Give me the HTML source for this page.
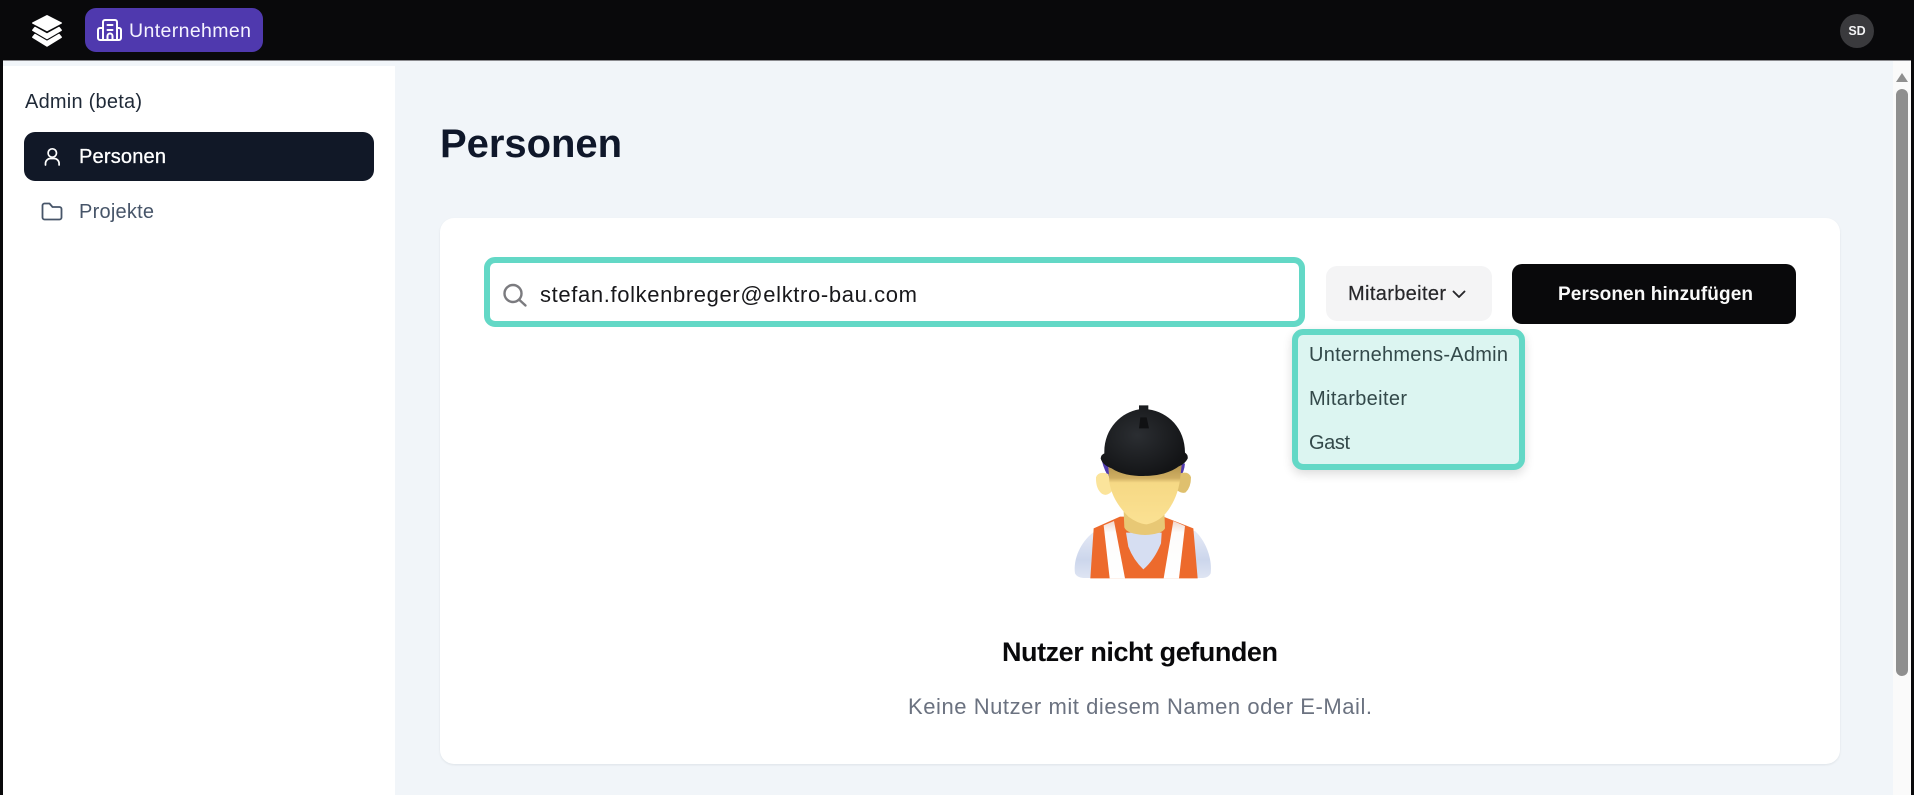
<!DOCTYPE html>
<html lang="de">
<head>
<meta charset="utf-8">
<title>Personen</title>
<style>
html,body{margin:0;padding:0;width:1914px;height:795px;overflow:hidden;background:#f1f5f9;font-family:"Liberation Sans",sans-serif}
.b{position:absolute;box-sizing:border-box}
svg{position:absolute;left:0;top:0;filter:blur(.3px)}
text{font-family:"Liberation Sans",sans-serif}
</style>
</head>
<body>
<div class="b" style="left:0;top:0;width:1914px;height:60px;background:#09090b"></div>
<div class="b" style="left:0;top:60px;width:1914px;height:1px;background:#8a8a8e"></div>
<div class="b" style="left:0;top:0;width:3px;height:795px;background:#09090b"></div>
<div class="b" style="left:1911px;top:0;width:3px;height:795px;background:#09090b"></div>
<div class="b" style="left:85px;top:8px;width:178px;height:44px;background:#4f39ae;border-radius:11px"></div>
<div class="b" style="left:1840px;top:14px;width:34px;height:34px;background:#3a3a3d;border-radius:50%"></div>
<div class="b" style="left:3px;top:66px;width:392px;height:729px;background:#fff"></div>
<div class="b" style="left:24px;top:132px;width:350px;height:49px;background:#111827;border-radius:11px"></div>
<div class="b" style="left:1893px;top:61px;width:18px;height:734px;background:#fafafa"></div>
<div class="b" style="left:1896px;top:89px;width:12px;height:587px;background:#8f8f8f;border-radius:6px"></div>
<div class="b" style="left:440px;top:218px;width:1400px;height:546px;background:#fff;border-radius:14px;box-shadow:0 1px 2px rgba(15,23,42,.08)"></div>
<div class="b" style="left:484px;top:257px;width:821px;height:70px;background:#fff;border:6px solid #63d8c6;border-radius:11px"></div>
<div class="b" style="left:1326px;top:266px;width:166px;height:55px;background:#f4f4f5;border-radius:11px"></div>
<div class="b" style="left:1512px;top:264px;width:284px;height:60px;background:#09090b;border-radius:10px"></div>
<div class="b" style="left:1292px;top:329px;width:233px;height:141px;background:#dcf5f1;border:6px solid #63d8c6;border-radius:11px;box-shadow:0 4px 10px rgba(0,0,0,.14)"></div>

<svg width="1914" height="795" viewBox="0 0 1914 795" xmlns="http://www.w3.org/2000/svg">
<defs>
<radialGradient id="hel" cx=".42" cy=".42" r=".6"><stop offset="0" stop-color="#2b2e32"/><stop offset="1" stop-color="#131416"/></radialGradient>
<linearGradient id="face" x1="0" y1="0" x2="0" y2="1"><stop offset="0" stop-color="#b4964f"/><stop offset=".22" stop-color="#cfae62"/><stop offset=".3" stop-color="#f6d985"/><stop offset="1" stop-color="#fbe193"/></linearGradient>
<linearGradient id="shirt" x1="0" y1="0" x2="0" y2="1"><stop offset="0" stop-color="#e6eaf6"/><stop offset=".6" stop-color="#ccd6ec"/><stop offset="1" stop-color="#dfe5f3"/></linearGradient>
<linearGradient id="stripe" x1="0" y1="0" x2="0" y2="1"><stop offset="0" stop-color="#f1d6cc"/><stop offset=".2" stop-color="#fdfcfb"/><stop offset="1" stop-color="#ffffff"/></linearGradient>
</defs>

<!-- logo -->
<g fill="#fff" stroke="#fff" stroke-width="1.500" stroke-linejoin="round">
<path d="M47 15.800 L61.200 23 L47 30.500 L32.800 23 Z"/>
<path d="M35 27.500 L47 34.200 L59 27.500 L61.200 30.200 L47 38.500 L32.800 30.200 Z"/>
<path d="M35 34.500 L47 41.500 L59 34.500 L61.200 37.200 L47 46 L32.800 37.200 Z"/>
</g>
<!-- building icon -->
<g fill="none" stroke="#fff" stroke-width="2" stroke-linecap="round" stroke-linejoin="round">
<path d="M103 40 V22 a2 2 0 0 1 2-2 h10 a2 2 0 0 1 2 2 V40"/>
<path d="M103 28 H100 a2 2 0 0 0-2 2 V38 a2 2 0 0 0 2 2 H119 a2 2 0 0 0 2-2 V30 a2 2 0 0 0-2-2 H117"/>
<path d="M107.500 25 h5 M107.500 30 h5 M107.500 40 v-4 a2.500 2.500 0 0 1 5 0 v4"/>
</g>
<text x="129" y="37" font-size="19.500" fill="#f5f3ff" textLength="122" lengthAdjust="spacing">Unternehmen</text>
<text x="1857" y="35" font-size="12.500" font-weight="700" fill="#f4f4f5" text-anchor="middle">SD</text>

<!-- sidebar -->
<text x="25" y="108" font-size="20" fill="#1f2937" textLength="117" lengthAdjust="spacing">Admin (beta)</text>
<g fill="none" stroke="#fff" stroke-width="1.700" stroke-linecap="round">
<circle cx="52.300" cy="153" r="4.200"/>
<path d="M45.500 165 v-1.500 a5 5 0 0 1 5-5 h3.600 a5 5 0 0 1 5 5 v1.500"/>
</g>
<text x="79" y="163" font-size="20" fill="#fff" stroke="#fff" stroke-width=".3" textLength="87" lengthAdjust="spacing">Personen</text>
<path d="M44.500 203.500 h5 l3 3.500 h7 a2 2 0 0 1 2 2 v8.500 a2 2 0 0 1-2 2 h-15 a2 2 0 0 1-2-2 v-12 a2 2 0 0 1 2-2 z" fill="none" stroke="#475569" stroke-width="1.800" stroke-linejoin="round"/>
<text x="79" y="218" font-size="20" fill="#475569" textLength="75" lengthAdjust="spacing">Projekte</text>

<!-- title -->
<text x="440" y="157" font-size="40" font-weight="700" fill="#0f172a" textLength="182" lengthAdjust="spacing">Personen</text>

<!-- search -->
<g fill="none" stroke="#7b7b7f" stroke-width="2.400" stroke-linecap="round">
<circle cx="513" cy="293.500" r="8.500"/>
<path d="M519.500 300 L525.500 305.500"/>
</g>
<text x="540" y="302" font-size="22" fill="#18181b" textLength="377" lengthAdjust="spacing">stefan.folkenbreger@elktro-bau.com</text>

<!-- filter -->
<text x="1348" y="300" font-size="20" fill="#27272a" stroke="#27272a" stroke-width=".2" textLength="98" lengthAdjust="spacing">Mitarbeiter</text>
<path d="M1453.500 291.500 L1459 297 L1464.500 291.500" fill="none" stroke="#27272a" stroke-width="1.900" stroke-linecap="round" stroke-linejoin="round"/>

<!-- primary -->
<text x="1558" y="300" font-size="19" font-weight="700" fill="#fafafa" textLength="195" lengthAdjust="spacing">Personen hinzufügen</text>

<!-- menu -->
<text x="1309" y="361" font-size="20" fill="#33494a" textLength="199" lengthAdjust="spacing">Unternehmens-Admin</text>
<text x="1309" y="405" font-size="20" fill="#33494a" textLength="98" lengthAdjust="spacing">Mitarbeiter</text>
<text x="1309" y="449" font-size="20" fill="#33494a" textLength="41" lengthAdjust="spacing">Gast</text>

<!-- worker -->
<g transform="translate(1065 400) scale(.33333)">
<path d="M30 520 C24 480 45 425 90 393 L390 393 C425 425 442 480 437 520 Q432 532 415 534 L55 534 Q35 532 30 520 Z" fill="url(#shirt)"/>
<path d="M76 535 L86 385 L165 350 L295 350 L385 385 L398 535 Z" fill="#ed6a2c"/>
<path d="M116 376 L147 363 L180 535 L134 535 Z" fill="url(#stripe)"/>
<path d="M325 363 L360 378 L342 535 L296 535 Z" fill="url(#stripe)"/>
<path d="M183 398 L290 398 L288 430 Q268 480 235 508 Q205 480 190 440 Z" fill="#d6def2"/>
<path d="M176 335 L298 335 L300 385 Q292 402 240 405 Q185 402 178 382 Z" fill="#e8c875"/>
<path d="M110 180 L128 190 L136 238 Q118 215 110 180 Z" fill="#4f39ae"/>
<path d="M342 195 L360 190 Q358 215 345 234 Z" fill="#4f39ae"/>
<path d="M130 222 Q100 212 93 232 Q92 268 112 282 Q128 290 142 272 Z" fill="#fbe49b"/>
<path d="M345 220 Q372 212 378 232 Q378 262 362 277 Q350 282 335 270 Z" fill="#dfc06e"/>
<path d="M130 195 L133 245 Q140 300 190 350 Q220 372 245 373 Q285 365 310 330 Q338 290 345 240 L350 195 Z" fill="url(#face)"/>
<path d="M118 160 C116 85 170 36 222 28 L222 16 L250 16 L250 28 C310 36 360 85 360 158 Q370 165 368 176 Q360 192 340 200 C310 222 270 228 235 228 C200 228 165 222 140 205 Q112 195 107 175 Q108 164 118 160 Z" fill="url(#hel)"/>
<path d="M222 85 L226 52 L245 52 L252 85" fill="#101113"/>
</g>

<!-- empty state -->
<text x="1002" y="661" font-size="27" font-weight="700" fill="#09090b" textLength="276" lengthAdjust="spacing">Nutzer nicht gefunden</text>
<text x="908" y="714" font-size="22" fill="#6b7280" textLength="464" lengthAdjust="spacing">Keine Nutzer mit diesem Namen oder E-Mail.</text>

<!-- scroll arrow -->
<path d="M1896 82 L1902 73 L1908 82 Z" fill="#8f8f8f"/>
</svg>
</body>
</html>
